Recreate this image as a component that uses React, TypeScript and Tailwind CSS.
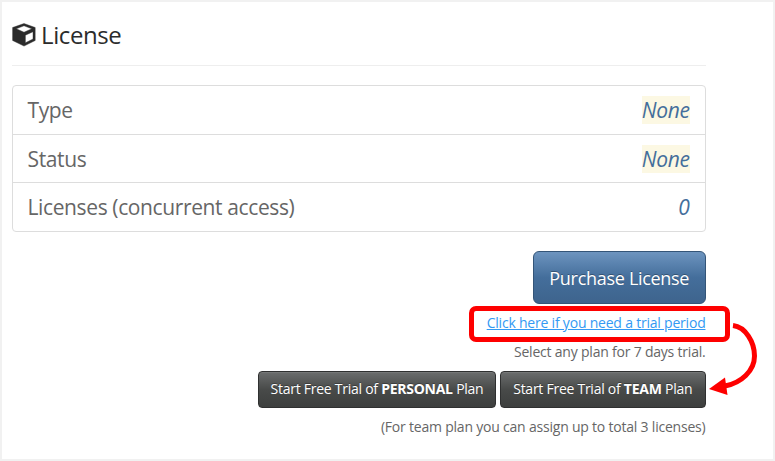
const rows = [
  { label: "Type", value: "None", mark: true, height: "h-[49px]" },
  { label: "Status", value: "None", mark: true, height: "h-[48px]" },
  { label: "Licenses (concurrent access)", value: "0", mark: false, height: "h-[48px]" },
];

function BoxIcon() {
  return (
    <svg width="24" height="24" viewBox="0 0 24 24" className="block shrink-0" aria-hidden="true">
      <path
        fillRule="evenodd"
        fill="#2b2b2b"
        stroke="#2b2b2b"
        strokeWidth=".4"
        strokeLinejoin="round"
        d="M12 .5 23.2 4.5V17.5L12 23.1 .6 17.5V4.5ZM12 2.8 4.3 5.8 12 9.2 19.8 5.8ZM13.4 12.2V19.8L21 16V8.8Z"
      />
    </svg>
  );
}

function TrialButton({ plan, width }: { plan: string; width: string }) {
  return (
    <button
      className={`${width} h-[37px] shrink-0 whitespace-nowrap rounded-[4px] border border-[#2f3030] bg-linear-to-b from-[#6b6d6d] via-[#484a49] via-50% to-[#3d3f3e] pb-[2px] text-[14px] tracking-[-0.26px] text-white shadow-[inset_0_1px_0_rgba(255,255,255,0.08)] [text-shadow:0_-1px_0_rgba(0,0,0,0.3)]`}
    >
      Start Free Trial of <b className="font-bold">{plan}</b> Plan
    </button>
  );
}

export default function App() {
  return (
    <div className="relative h-[461px] w-[775px] overflow-hidden border-2 border-[#f1f1f1] bg-white pl-[10px] font-['Open_Sans','Noto_Sans',sans-serif] text-[#666]">
      <main className="w-[693.5px]">
        <h1 className="flex h-[64px] items-center gap-[5px] border-b border-[#eee] pt-[2px] text-[24px] tracking-[-0.4px] text-[#2b2b2b]">
          <BoxIcon />
          <span>License</span>
        </h1>
        <ul className="mt-[19px] divide-y divide-[#ddd] rounded-[4px] border border-[#ddd]">
          {rows.map((row) => (
            <li key={row.label} className={`${row.height} flex items-center justify-between pl-[14.5px] pr-[15px] text-[21px] leading-[28px] tracking-[-0.38px]`}>
              <span>{row.label}</span>
              <em className={`${row.mark ? "bg-[#fcf8e3]" : ""} text-[#446e9b]`}>{row.value}</em>
            </li>
          ))}
        </ul>
        <div className="flex flex-col items-end text-[14px] leading-[20px] tracking-[-0.21px]">
          <button className="mt-[19px] h-[53px] w-[172.5px] rounded-[6px] border border-[#345578] bg-linear-to-b from-[#6d94bf] via-[#446e9b] via-50% to-[#3e648d] text-[18px] tracking-[-0.3px] text-white [text-shadow:0_-1px_0_rgba(0,0,0,0.3)]">
            Purchase License
          </button>
          <a className="mt-[9px] text-[#3399f3] underline">Click here if you need a trial period</a>
          <p className="mt-[9px]">Select any plan for 7 days trial.</p>
          <div className="mt-[9px] flex gap-[4px]">
            <TrialButton plan="PERSONAL" width="w-[238px]" />
            <TrialButton plan="TEAM" width="w-[205.5px]" />
          </div>
          <p className="mt-[9px]">(For team plan you can assign up to total 3 licenses)</p>
        </div>
      </main>
      <div className="absolute left-[467px] top-[304px] h-[36px] w-[261px] rounded-[7px] border-[5px] border-[#fe0000]" />
      <svg className="absolute left-[698px] top-[298px]" width="75" height="110" viewBox="0 0 75 110" aria-hidden="true">
        <path d="M33 25.5C45.5 27 54.5 42 54.5 56C54.5 71 41 83 25 86" fill="none" stroke="#fe0000" strokeWidth="5" />
        <path d="M9 89 25 77.5 27.5 95Z" fill="#fe0000" />
      </svg>
    </div>
  );
}
